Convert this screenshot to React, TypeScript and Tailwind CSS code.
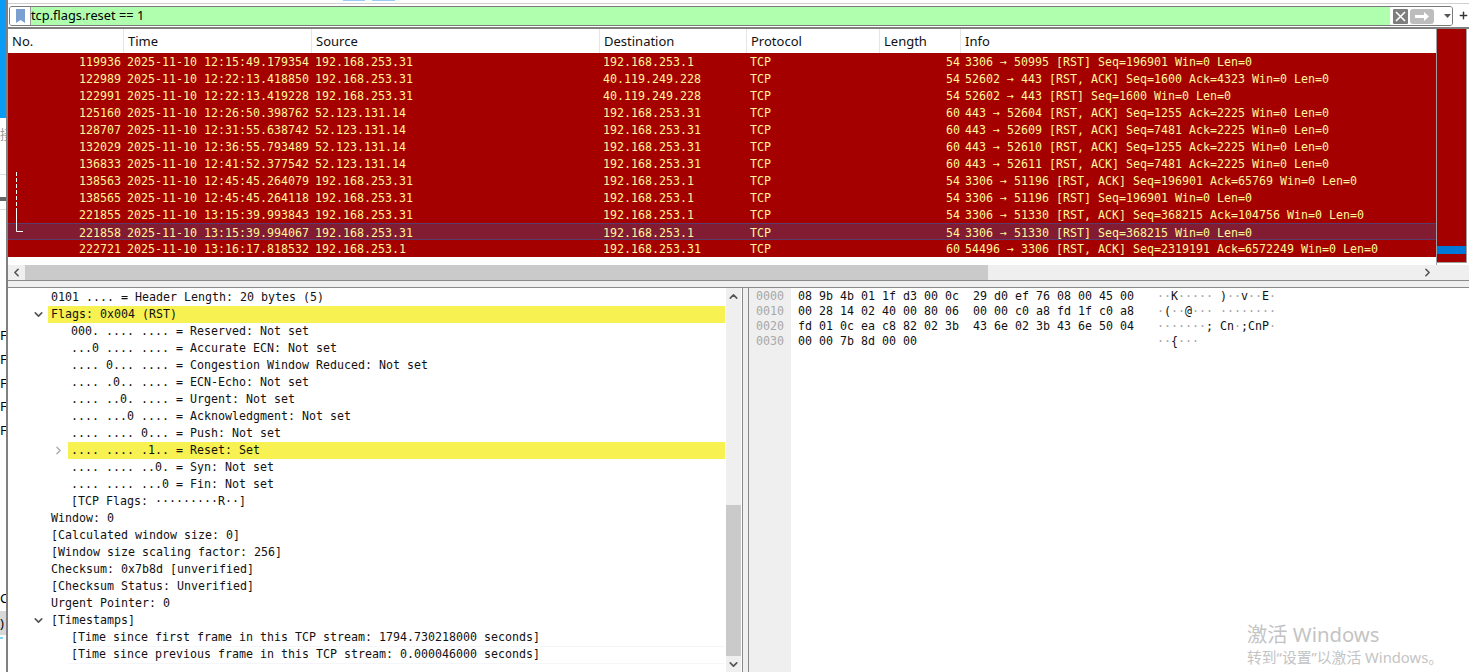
import { ChevronDown, ChevronRight, ChevronLeft, ChevronUp, Plus } from "lucide-react";

// ── Data ───────────────────────────────────────────────
const PACKETS = [
  ["119936", "2025-11-10 12:15:49.179354", "192.168.253.31", "192.168.253.1", "54", "3306 → 50995 [RST] Seq=196901 Win=0 Len=0"],
  ["122989", "2025-11-10 12:22:13.418850", "192.168.253.31", "40.119.249.228", "54", "52602 → 443 [RST, ACK] Seq=1600 Ack=4323 Win=0 Len=0"],
  ["122991", "2025-11-10 12:22:13.419228", "192.168.253.31", "40.119.249.228", "54", "52602 → 443 [RST] Seq=1600 Win=0 Len=0"],
  ["125160", "2025-11-10 12:26:50.398762", "52.123.131.14", "192.168.253.31", "60", "443 → 52604 [RST, ACK] Seq=1255 Ack=2225 Win=0 Len=0"],
  ["128707", "2025-11-10 12:31:55.638742", "52.123.131.14", "192.168.253.31", "60", "443 → 52609 [RST, ACK] Seq=7481 Ack=2225 Win=0 Len=0"],
  ["132029", "2025-11-10 12:36:55.793489", "52.123.131.14", "192.168.253.31", "60", "443 → 52610 [RST, ACK] Seq=1255 Ack=2225 Win=0 Len=0"],
  ["136833", "2025-11-10 12:41:52.377542", "52.123.131.14", "192.168.253.31", "60", "443 → 52611 [RST, ACK] Seq=7481 Ack=2225 Win=0 Len=0"],
  ["138563", "2025-11-10 12:45:45.264079", "192.168.253.31", "192.168.253.1", "54", "3306 → 51196 [RST, ACK] Seq=196901 Ack=65769 Win=0 Len=0"],
  ["138565", "2025-11-10 12:45:45.264118", "192.168.253.31", "192.168.253.1", "54", "3306 → 51196 [RST] Seq=196901 Win=0 Len=0"],
  ["221855", "2025-11-10 13:15:39.993843", "192.168.253.31", "192.168.253.1", "54", "3306 → 51330 [RST, ACK] Seq=368215 Ack=104756 Win=0 Len=0"],
  ["221858", "2025-11-10 13:15:39.994067", "192.168.253.31", "192.168.253.1", "54", "3306 → 51330 [RST] Seq=368215 Win=0 Len=0"],
  ["222721", "2025-11-10 13:16:17.818532", "192.168.253.1", "192.168.253.31", "60", "54496 → 3306 [RST, ACK] Seq=2319191 Ack=6572249 Win=0 Len=0"],
];

const COLUMNS = ["No.", "Time", "Source", "Destination", "Protocol", "Length", "Info"];

type TreeRow = { text: string; child?: boolean; open?: boolean; closed?: boolean; hl?: boolean; faint?: boolean };

const TREE: TreeRow[] = [
  { text: "0101 .... = Header Length: 20 bytes (5)" },
  { text: "Flags: 0x004 (RST)", open: true, hl: true },
  { text: "000. .... .... = Reserved: Not set", child: true },
  { text: "...0 .... .... = Accurate ECN: Not set", child: true },
  { text: ".... 0... .... = Congestion Window Reduced: Not set", child: true },
  { text: ".... .0.. .... = ECN-Echo: Not set", child: true },
  { text: ".... ..0. .... = Urgent: Not set", child: true },
  { text: ".... ...0 .... = Acknowledgment: Not set", child: true },
  { text: ".... .... 0... = Push: Not set", child: true },
  { text: ".... .... .1.. = Reset: Set", child: true, closed: true, hl: true },
  { text: ".... .... ..0. = Syn: Not set", child: true },
  { text: ".... .... ...0 = Fin: Not set", child: true },
  { text: "[TCP Flags: ·········R··]", child: true },
  { text: "Window: 0" },
  { text: "[Calculated window size: 0]" },
  { text: "[Window size scaling factor: 256]" },
  { text: "Checksum: 0x7b8d [unverified]" },
  { text: "[Checksum Status: Unverified]" },
  { text: "Urgent Pointer: 0" },
  { text: "[Timestamps]", open: true },
  { text: "[Time since first frame in this TCP stream: 1794.730218000 seconds]", child: true, faint: true },
  { text: "[Time since previous frame in this TCP stream: 0.000046000 seconds]", child: true, faint: true },
];

const HEX = [
  ["0000", "08 9b 4b 01 1f d3 00 0c  29 d0 ef 76 08 00 45 00", "··K····· )··v··E·"],
  ["0010", "00 28 14 02 40 00 80 06  00 00 c0 a8 fd 1f c0 a8", "·(··@··· ········"],
  ["0020", "fd 01 0c ea c8 82 02 3b  43 6e 02 3b 43 6e 50 04", "·······; Cn·;CnP·"],
  ["0030", "00 00 7b 8d 00 00", "··{···"],
];

const MONO = "font-['DejaVu_Sans_Mono','Liberation_Mono',monospace] text-[11.63px]";

// ── Sub-components ─────────────────────────────────────

function LeftEdge() {
  return (
    <div className="flex h-full w-[8px] shrink-0 flex-col overflow-hidden border-r-2 border-[#808080] bg-white font-['Noto_Sans',sans-serif] text-[13px] leading-[16px] text-black">
      <div className="h-[118px] shrink-0 bg-[#0a9cf5]" />
      <div className="h-[8px] shrink-0" />
      <div className="h-[16px] shrink-0 overflow-hidden font-['Noto_Sans_CJK_SC',sans-serif] text-[#999]">接</div>
      <div className="h-[33px] shrink-0 border-b border-[#ddd]" />
      <div className="mt-[22px] h-[4px] w-[6px] shrink-0 bg-[#666]" />
      <div className="mt-[8px] h-[1px] shrink-0 bg-[#ddd]" />
      <div className="h-[117px] shrink-0" />
      {[0, 1, 2, 3, 4].map((i) => (
        <div key={i} className="h-[23.8px] shrink-0 whitespace-nowrap">FA</div>
      ))}
      <div className="h-[144px] shrink-0" />
      <div className="h-[16px] shrink-0">C</div>
      <div className="mt-[5px] h-[24px] shrink-0 bg-[#d8d8d8] leading-[24px]">)</div>
      <div className="mt-[2px] h-[2px] w-[3px] shrink-0 bg-[#7fd4f5]" />
    </div>
  );
}

function FilterBar() {
  return (
    <div className="flex h-[23px] shrink-0 items-start bg-white pt-[2px] pl-[1px]">
      <div className="flex h-[20px] w-[1444px] shrink-0 items-stretch overflow-hidden rounded-[3px] border border-[#7a7a7a]">
        <div className="flex w-[21px] shrink-0 items-center justify-center border-r border-[#9a9a9a] bg-white">
          <svg width="9" height="14" viewBox="0 0 9 14">
            <path d="M0 0h9v14L4.5 11 0 14z" fill="#7c9fd2" />
          </svg>
        </div>
        <div className="flex flex-1 items-center bg-[#afffaf] font-['Noto_Sans',sans-serif] text-[12.8px] text-black">
          tcp.flags.reset == 1
        </div>
        <div className="flex w-[62px] shrink-0 items-center bg-white pl-[3px]">
          <svg width="15" height="15" viewBox="0 0 15 15" className="shrink-0">
            <rect width="15" height="15" rx="1" fill="#7e7e7e" />
            <path d="M3 3l9 9M12 3l-9 9" stroke="#fff" strokeWidth="1.6" />
          </svg>
          <svg width="24" height="15" viewBox="0 0 24 15" className="ml-[2px] shrink-0">
            <rect width="24" height="15" rx="3" fill="#bdbdbd" />
            <path d="M5 6h9V3l5 4.5-5 4.5V9H5z" fill="#fff" />
          </svg>
          <svg width="7" height="4" viewBox="0 0 7 4" className="ml-[10px] shrink-0">
            <path d="M0 0h7L3.5 4z" fill="#555" />
          </svg>
        </div>
      </div>
      <Plus size={11} strokeWidth={3} className="mt-[4px] ml-[5px] text-[#333]" />
    </div>
  );
}

function PacketRow({ cells, selected }: { cells: string[]; selected: boolean }) {
  return (
    <div
      className={
        "grid h-[17px] grid-cols-[116px_188px_288px_147px_133px_81px_1fr] items-center whitespace-nowrap pt-[1px] text-[#fff799] " +
        (selected ? "border-y border-[#5b3a6e] bg-[#811c33]" : "bg-[#a40000]")
      }
    >
      <span className="pr-[3px] text-right">{cells[0]}</span>
      <span className="pl-[3px]">{cells[1]}</span>
      <span className="pl-[3px]">{cells[2]}</span>
      <span className="pl-[3px]">{cells[3]}</span>
      <span className="pl-[3px]">TCP</span>
      <span className="pr-[1px] text-right">{cells[4]}</span>
      <span className="pl-[4px]">{cells[5]}</span>
    </div>
  );
}

function PacketPane() {
  return (
    <div className="flex h-[251px] shrink-0 flex-col bg-white">
      <div className="flex h-[236px] shrink-0">
        <div className="relative w-[1429px] shrink-0 border-r border-[#a0a0a0]">
          <div className="grid h-[24px] grid-cols-[116px_188px_288px_147px_133px_81px_1fr] items-center font-['Noto_Sans',sans-serif] text-[13px] text-[#111]">
            {COLUMNS.map((c) => (
              <span key={c} className="flex h-full items-center border-r border-[#e6e6e6] pt-[2px] pl-[4px] last:border-r-0">
                {c}
              </span>
            ))}
          </div>
          <div className={MONO}>
            {PACKETS.map((p, i) => (
              <PacketRow key={p[0]} cells={p} selected={i === 10} />
            ))}
          </div>
          {/* conversation marker over the first column */}
          <svg width="10" height="62" viewBox="0 0 10 62" className="absolute top-[143px] left-[5px]">
            <path d="M3.5 0v37" stroke="#fff" strokeDasharray="4 2" fill="none" />
            <path d="M3.5 37v22.5h7" stroke="#fff" fill="none" />
          </svg>
        </div>
        <div className="flex h-[234px] w-[30px] shrink-0 flex-col border-r border-b border-[#a0a0a0] bg-[#a40000]">
          <div className="mt-[217px] h-[8px] bg-[#0078d7]" />
        </div>
      </div>
      <div className="flex-1" />
      <div className="flex h-[15px] shrink-0 items-center bg-[#efefef]">
        <div className="flex w-[17px] shrink-0 justify-center">
          <ChevronLeft size={13} strokeWidth={3} className="text-[#555]" />
        </div>
        <div className="h-full w-[963px] shrink-0 bg-[#cacaca]" />
        <div className="w-[433px] shrink-0" />
        <ChevronRight size={13} strokeWidth={3} className="text-[#555]" />
      </div>
    </div>
  );
}

function DetailRow({ row }: { row: TreeRow }) {
  return (
    <div className="flex h-[17px] items-center whitespace-nowrap text-[#111]">
      <div className={(row.child ? "w-[60px]" : "w-[40px]") + " flex shrink-0 justify-end pr-[3px]"}>
        {row.open && <ChevronDown size={13} strokeWidth={3} className="text-[#555]" />}
        {row.closed && <ChevronRight size={13} strokeWidth={2.5} className="text-[#aaa]" />}
      </div>
      <div
        className={
          "flex h-full flex-1 items-center pl-[3px] " +
          (row.hl ? "bg-[#f7f152]" : "") +
          (row.faint ? " shadow-[0_1px_0_#f4f6fa]" : "")
        }
      >
        {row.text}
      </div>
    </div>
  );
}

function AsciiText({ text }: { text: string }) {
  return (
    <span>
      {text.split("").map((ch, i) => (
        <span key={i} className={ch === "·" ? "text-[#a3a3a3]" : "text-[#111]"}>
          {ch}
        </span>
      ))}
    </span>
  );
}

function DetailPane() {
  return (
    <div className={"flex min-h-0 flex-1 bg-white " + MONO}>
      <div className="w-[718px] shrink-0 overflow-hidden pt-[1px] pr-[1px]">
        {TREE.map((row, i) => (
          <DetailRow key={i} row={row} />
        ))}
      </div>
      <div className="flex w-[15px] shrink-0 flex-col items-center bg-[#efefef]">
        <ChevronUp size={13} strokeWidth={3} className="mt-[2px] text-[#555]" />
        <div className="mt-[202px] h-[151px] w-full bg-[#cacaca]" />
        <ChevronDown size={13} strokeWidth={3} className="mt-[2px] text-[#555]" />
      </div>
      <div className="ml-[1px] w-[7px] shrink-0 border-x border-[#8a8a8a] bg-[#f0f0f0]" />
      <div className="w-[42px] shrink-0 bg-[#efefef] pt-[1px] pl-[7px] text-[#a8a8a8]">
        {HEX.map((h) => (
          <div key={h[0]} className="flex h-[15px] items-center">{h[0]}</div>
        ))}
      </div>
      <div className="flex-1 pt-[1px] pl-[7px] text-[#111]">
        {HEX.map((h) => (
          <div key={h[0]} className="flex h-[15px] items-center whitespace-pre">
            <span className="w-[359px] shrink-0">{h[1]}</span>
            <AsciiText text={h[2]} />
          </div>
        ))}
      </div>
    </div>
  );
}

// ── Page ───────────────────────────────────────────────
export default function App() {
  return (
    <div className="relative flex h-[672px] w-[1469px] overflow-hidden bg-white">
      <LeftEdge />
      <div className="flex min-w-0 flex-1 flex-col">
        <div className="flex h-[4px] shrink-0 items-start border-b border-[#d0d0d0] bg-white">
          <div className="ml-[335px] h-[1px] w-[22px] bg-[#9ccbf5]" />
          <div className="ml-[7px] h-[1px] w-[23px] bg-[#9ccbf5]" />
        </div>
        <FilterBar />
        <div className="h-[2px] shrink-0 bg-[#808080]" />
        <PacketPane />
        <div className="h-[8px] shrink-0 border-y border-[#8a8a8a] bg-[#f0f0f0]" />
        <DetailPane />
      </div>
      {/* activation watermark over the desktop */}
      <div className="pointer-events-none absolute top-[621px] left-[1247px] whitespace-nowrap font-['Noto_Sans','Noto_Sans_CJK_SC',sans-serif] text-[#c4c4c4]">
        <div className="text-[20.3px] leading-[26px]">激活 Windows</div>
        <div className="text-[14.8px] leading-[20px]">转到“设置”以激活 Windows。</div>
      </div>
    </div>
  );
}
